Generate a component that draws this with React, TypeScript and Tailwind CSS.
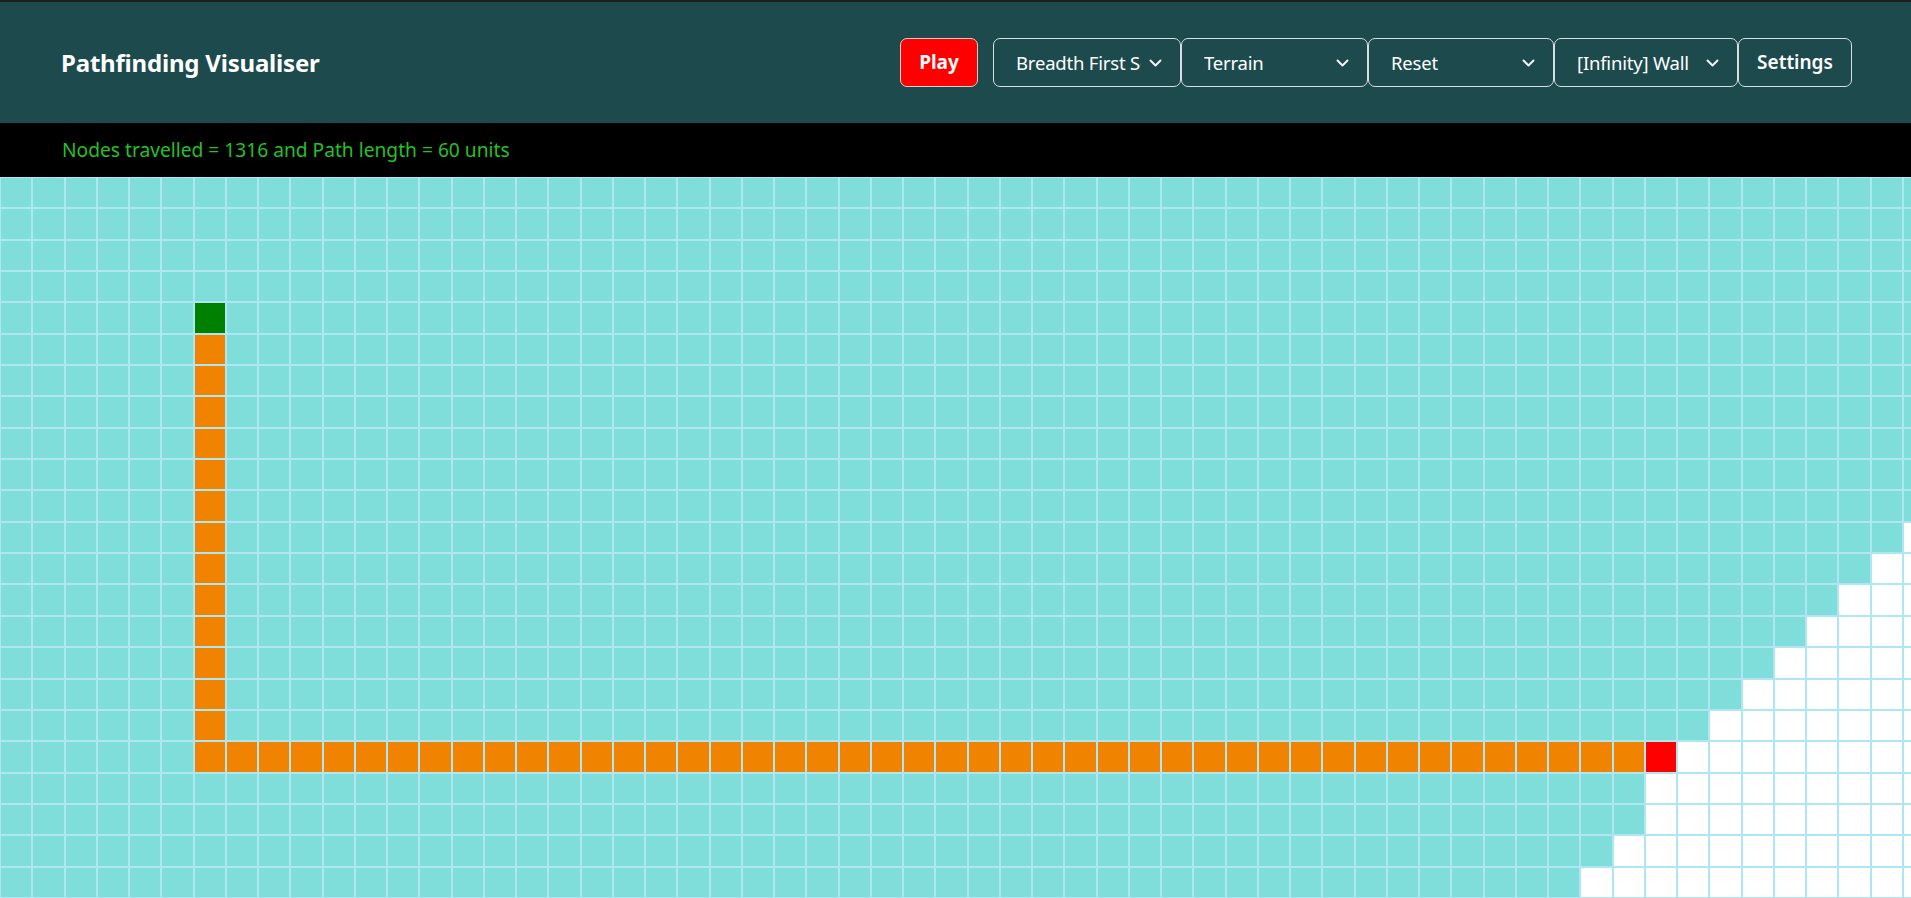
import React from "react";
//----------------------------------------------------------------------------------//
//-----> Grid data <-------------------------------------------//
//----------------------------------------------------------------------------------//
const COLS = 60;
const ROWS = 23;
const START = { col: 6, row: 4 };
const END = { col: 51, row: 18 };

type CellKind = "visited" | "unvisited" | "path" | "start" | "end";

const getCellKind = (col: number, row: number): CellKind => {
  if (col === START.col && row === START.row) return "start";
  if (col === END.col && row === END.row) return "end";
  // path: down from start then right to end
  if (col === START.col && row > START.row && row <= END.row) return "path";
  if (row === END.row && col >= START.col && col < END.col) return "path";
  const dist = Math.abs(col - START.col) + Math.abs(row - START.row);
  const limit = row <= 19 ? 60 : 61;
  return dist >= limit ? "unvisited" : "visited";
};

const cellClass: Record<CellKind, string> = {
  visited: "bg-[#7fded9]",
  unvisited: "bg-white",
  path: "bg-[#f08300]",
  start: "bg-[#008000]",
  end: "bg-[#ff0000]",
};

//----------------------------------------------------------------------------------//
const Chevron = () => (
  <svg width="13" height="8" viewBox="0 0 13 8" fill="none" className="shrink-0">
    <path
      d="M1.5 1.5l5 5 5-5"
      stroke="#f1f3f5"
      strokeWidth="2"
      strokeLinecap="round"
      strokeLinejoin="round"
    />
  </svg>
);

type SelectProps = {
  label: string;
  width: string;
  textWidth?: string;
};

const FakeSelect = (props: SelectProps) => {
  return (
    <div
      className={`${props.width} h-[49px] shrink-0 flex items-center justify-between pl-[22px] pr-[18px] border border-[#d8dde2] rounded-[7px] text-white text-[18.5px] tracking-[-0.2px] cursor-pointer`}
    >
      <span className={`${props.textWidth ?? ""} overflow-hidden whitespace-nowrap`}>
        {props.label}
      </span>
      <Chevron />
    </div>
  );
};

//----------------------------------------------------------------------------------//
const App = () => {
  //-------------------------------------------------------------------------//
  const rows = Array.from({ length: ROWS }, (_, r) => r);
  const cols = Array.from({ length: COLS }, (_, c) => c);
  //-------------------------------------------------------------------------//
  return (
    <div className="w-full h-[898px] overflow-hidden bg-white font-['Noto_Sans',sans-serif]">
      <div className="h-[2px] bg-[#1d1f1f]" />
      {/* -----> Header <----- */}
      <div className="h-[121px] bg-[#1c4a4d] flex items-center justify-between pl-[61px] pr-[59px]">
        <div className="text-white font-bold text-[24px] tracking-[-0.2px]">
          Pathfinding Visualiser
        </div>
        <div className="flex items-center">
          <button className="w-[78px] h-[49px] mr-[15px] rounded-[7px] border border-[#d0d0d0] bg-[#ff0000] text-white font-bold text-[19px]">
            Play
          </button>
          <FakeSelect label="Breadth First Search" width="w-[188px]" textWidth="w-[125px]" />
          <FakeSelect label="Terrain" width="w-[187px]" />
          <FakeSelect label="Reset" width="w-[186px]" />
          <FakeSelect label="[Infinity] Wall" width="w-[184px]" />
          <button className="w-[114px] h-[49px] shrink-0 rounded-[7px] border border-[#d8dde2] text-white font-semibold text-[19px]">
            Settings
          </button>
        </div>
      </div>
      {/* -----> Status <----- */}
      <div className="h-[54px] bg-black flex items-center pl-[62px] text-[19.2px] text-[#25c125]">
        Nodes travelled = 1316 and Path length = 60 units
      </div>
      {/* -----> Grid <----- */}
      <div className="flex flex-col w-max">
        {rows.map((r) => (
          <div key={r} className="flex h-[31.35px]">
            {cols.map((c) => (
              <div
                key={c}
                className={`w-[32.25px] h-full shrink-0 border border-[#aee6f4] ${cellClass[getCellKind(c, r)]}`}
              />
            ))}
          </div>
        ))}
      </div>
    </div>
  );
};

export default App;
